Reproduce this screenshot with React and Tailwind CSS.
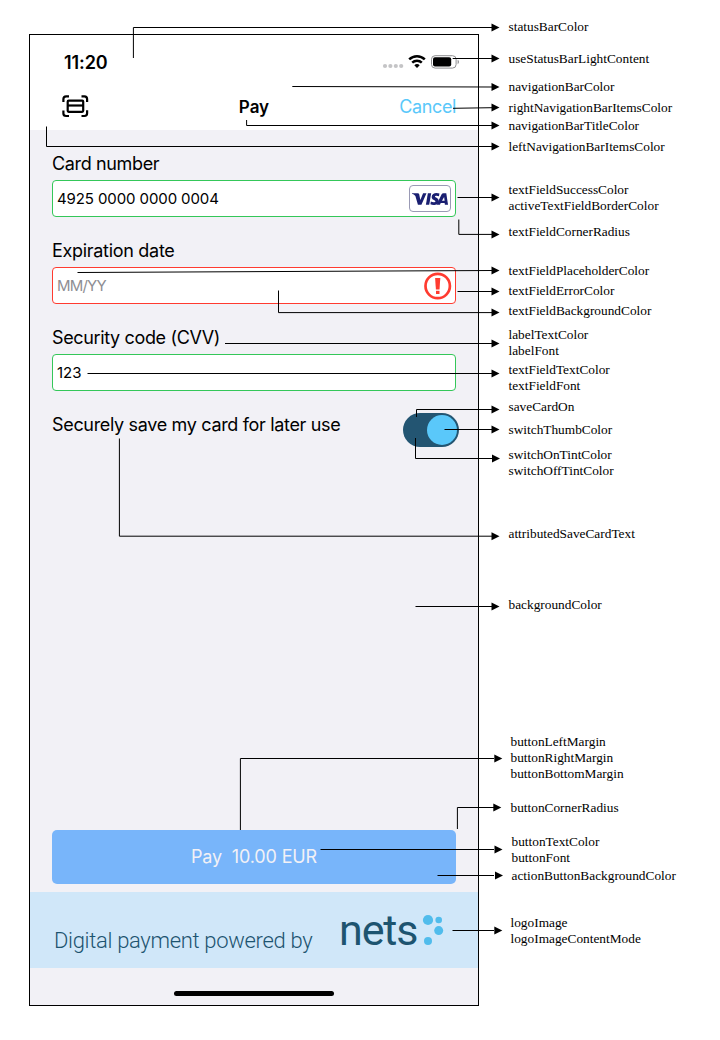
import React from "react";

const labels = [
  ["mt-[19px]", ["statusBarColor"]],
  ["mt-[16px]", ["useStatusBarLightContent"]],
  ["mt-[12px]", ["navigationBarColor"]],
  ["mt-[5px]", ["rightNavigationBarItemsColor"]],
  ["mt-[2px]", ["navigationBarTitleColor"]],
  ["mt-[5px]", ["leftNavigationBarItemsColor"]],
  ["mt-[27px]", ["textFieldSuccessColor", "activeTextFieldBorderColor"]],
  ["mt-[10px]", ["textFieldCornerRadius"]],
  ["mt-[23px]", ["textFieldPlaceholderColor"]],
  ["mt-[4px]", ["textFieldErrorColor"]],
  ["mt-[4px]", ["textFieldBackgroundColor"]],
  ["mt-[8px]", ["labelTextColor", "labelFont"]],
  ["mt-[3px]", ["textFieldTextColor", "textFieldFont"]],
  ["mt-[5px]", ["saveCardOn"]],
  ["mt-[7px]", ["switchThumbColor"]],
  ["mt-[9px]", ["switchOnTintColor", "switchOffTintColor"]],
  ["mt-[47px]", ["attributedSaveCardText"]],
  ["mt-[55px]", ["backgroundColor"]],
  ["mt-[121px] pl-[2px]", ["buttonLeftMargin", "buttonRightMargin", "buttonBottomMargin"]],
  ["mt-[18px] pl-[2px]", ["buttonCornerRadius"]],
  ["mt-[18px] pl-[3px]", ["buttonTextColor", "buttonFont"]],
  ["mt-[2px] pl-[3px]", ["actionButtonBackgroundColor"]],
  ["mt-[31px] pl-[2px]", ["logoImage", "logoImageContentMode"]],
];

// Each connector: path of the leader line, then the tip of its arrow head.
const connectors = [
  ["M133.4 58V27.5H492", 499.5, 27.5],
  ["M452.7 58.5H492", 499.5, 58.5],
  ["M292.3 86.5L492 87", 499.5, 87],
  ["M453 108.3L492 107.7", 499.5, 107.6],
  ["M246.6 120V125.5H492", 499.5, 125.5],
  ["M46.5 126.5V146.5H492", 499.5, 146.5],
  ["M457.5 197.5H492", 499.5, 197.5],
  ["M458.8 219.5V234.4H492", 499.5, 234.4],
  ["M77.5 272.5L492 270.5", 499.5, 270.5],
  ["M457.5 291.5H492", 499.5, 291.5],
  ["M278.5 290.5V312.6H492", 499.5, 312.6],
  ["M225 343.5H492", 499.5, 343.5],
  ["M87.5 373.5H492", 499.5, 373.5],
  ["M416.5 417V409.5H492", 499.5, 409.5],
  ["M444.5 429.5H492", 499.5, 429.5],
  ["M415.5 438V458.5H492", 500, 458.5],
  ["M119.4 438.5V536.2H492", 499.5, 536.2],
  ["M415.5 606.5H492", 499.5, 606.5],
  ["M240.4 830V758.5H494", 502.3, 758.5],
  ["M457.4 829V807.5H494", 501.3, 807.5],
  ["M320.5 849.5H494", 502.5, 849.5],
  ["M437.5 875.5H494", 503, 875.5],
  ["M452.5 930.5H494", 502.3, 930.5],
];

function Connectors() {
  return (
    <svg className="pointer-events-none absolute left-0 top-0" width="720" height="1040" fill="none" stroke="#000">
      {connectors.map(([d, x, y]) => (
        <g key={d}>
          <path d={d} />
          <path d={`M${x} ${y}l-8 -4v8z`} fill="#000" stroke="none" />
        </g>
      ))}
    </svg>
  );
}

function StatusBar() {
  return (
    <div className="flex h-[54px] items-center pl-[34px] pr-[19px]">
      <span className="text-[18px] font-semibold tracking-[-0.1px]">11:20</span>
      <svg className="ml-auto" width="77" height="18" viewBox="0 0 77 18">
        <g fill="#c4c4c6">
          <circle cx="3" cy="13" r="2.1" />
          <circle cx="8.4" cy="13" r="2.1" />
          <circle cx="13.8" cy="13" r="2.1" />
          <circle cx="19.2" cy="13" r="2.1" />
        </g>
        <g fill="none" stroke="#000" strokeWidth="2.5">
          <path d="M27.2 6.3a11.2 11.2 0 0 1 15.6 0" />
          <path d="M30.2 9.7a7 7 0 0 1 9.6 0" />
        </g>
        <path d="M35 15l-2.7-2.7a3.8 3.8 0 0 1 5.4 0z" />
        <rect x="49.5" y="2.7" width="24.6" height="12.4" rx="3.6" fill="none" stroke="#8e8e90" />
        <rect x="51" y="4.2" width="18.2" height="9.4" rx="2" />
        <path d="M75.6 6.8q1.4.6 1.4 2.2t-1.4 2.2z" fill="#8e8e90" />
      </svg>
    </div>
  );
}

function NavBar() {
  return (
    <div className="grid h-[41px] grid-cols-3 items-start pl-[32px] pr-[22px]">
      <svg className="mt-[6px]" width="27" height="23" viewBox="0 0 27 23" fill="none" stroke="#000" strokeWidth="2.2">
        <path d="M1.4 7V4Q1.4 1.3 4.1 1.3H7" />
        <path d="M19.500 1.3h2.900Q25.100 1.3 25.100 4V7" />
        <path d="M1.4 15.500v3Q1.400 21 4.100 21H7" />
        <path d="M19.500 21h2.900Q25.100 21 25.100 18.300v-3" />
        <rect x="5.700" y="5.600" width="15.500" height="11.200" rx="1" />
        <path d="M6 10.500h15.200" />
      </svg>
      <span className="mt-[7px] pr-[10px] text-center text-[17px] leading-[22px] font-semibold">Pay</span>
      <span className="mt-[7px] text-right text-[18px] leading-[22px] tracking-[-0.4px] text-[#5ac8fa]">Cancel</span>
    </div>
  );
}

function Visa() {
  return (
    <span className="flex h-[27px] w-[42px] items-center justify-center rounded-[4px] border border-[#9a9ab5] bg-white">
      <svg width="38" height="14" viewBox="0 0 39 14" fill="#1a1f71">
        <path d="M1 1h5.900q1.300 0 1.500 1.200l1.200 5.700L12.400 1h3.500l-5.200 12H7.100L4.500 3.800Q3 2 1 1.500z" />
        <path d="M17.300 1h3.400l-2 12h-3.400z" />
        <path d="M29.200 1.400l-.5 2.800c-2-.9-4.100-.7-4.100.3 0 1.200 3.900 1.400 3.900 4.500 0 3.900-4.900 5-8.600 3.500l.5-2.900c2 1.100 4.700 1 4.700-.2 0-1.300-3.900-1.400-3.900-4.500C21.200 1.100 25.700.1 29.200 1.400z" />
        <path d="M33.300 1h2.900L38 13h-3.200l-.3-1.800h-4L29.700 13h-3.500L31.300 2.300Q32 1 33.300 1zM34 5l-2.200 3.800h2.700z" />
      </svg>
    </span>
  );
}

function Alert() {
  return (
    <svg className="-mr-px" width="28" height="28" viewBox="0 0 28 28" fill="#ff3b30">
      <circle cx="13.700" cy="14" r="12.200" fill="none" stroke="#ff3b30" strokeWidth="2.700" />
      <path d="M11.100 6h5.200l-.8 11.400h-3.600z" />
      <rect x="12" y="18.800" width="3.500" height="3.200" />
    </svg>
  );
}

function Field({ label, tracking, border, children }) {
  return (
    <div className="h-[87px]">
      <div className={`h-[28px] pt-px text-[18px] leading-[22px] ${tracking}`}>{label}</div>
      <div className={`flex h-[37px] items-center justify-between rounded-[4px] border bg-white pl-[4px] pr-[4px] text-[15px] ${border}`}>
        {children}
      </div>
    </div>
  );
}

export default function App() {
  return (
    <div className="relative flex h-[1040px] w-[720px] overflow-hidden bg-white pl-[29px] font-['Inter',sans-serif] text-black">
      <main className="mt-[34px] flex h-[972px] w-[450px] shrink-0 flex-col border border-black bg-[#f2f1f6]">
        <header className="h-[95px] shrink-0 bg-white">
          <StatusBar />
          <NavBar />
        </header>
        <section className="px-[22px] pt-[22px]">
          <Field label="Card number" tracking="tracking-[-0.36px]" border="border-[#34c759]">
            <span className="pt-[2px] tracking-[-0.1px]">4925 0000 0000 0004</span>
            <Visa />
          </Field>
          <Field label="Expiration date" tracking="tracking-[-0.3px]" border="border-[#ff3b30]">
            <span className="pt-[2px] tracking-[-0.8px] text-[#8e8e93]">MM/YY</span>
            <Alert />
          </Field>
          <Field label="Security code (CVV)" tracking="tracking-[-0.36px]" border="border-[#34c759]">
            <span className="pt-[2px]">123</span>
          </Field>
          <div className="flex justify-between">
            <span className="whitespace-nowrap pt-px text-[18px] leading-[22px] tracking-[-0.33px]">Securely save my card for later use</span>
            <span className="-mr-[3px] flex h-[34px] w-[56px] shrink-0 items-center justify-end rounded-full bg-[#235572] pr-[2px]">
              <span className="size-[30px] rounded-full bg-[#5ac8fa]" />
            </span>
          </div>
        </section>
        <button className="mx-[22px] mt-auto h-[54px] shrink-0 whitespace-pre rounded-[5px] bg-[#78b5fa] text-[18px] tracking-[-0.15px] text-[#f2f1f6]">Pay  10.00 EUR</button>
        <footer className="mt-[8.500px] flex h-[76px] shrink-0 items-start bg-[#d0e7f9] pl-[24px] text-[#1d5470]">
          <span className="mt-[35px] w-[285px] whitespace-nowrap font-['Roboto',sans-serif] text-[22px] leading-[28px] font-light tracking-[-0.320px]">Digital payment powered by</span>
          <span className="mt-[13px] w-[83px] font-['Roboto',sans-serif] text-[43px] leading-[50px] tracking-[-1.100px]">nets</span>
          <svg className="mt-[22px]" width="22" height="32" viewBox="0 0 22 32" fill="#50bcec">
            <circle cx="6" cy="6" r="5.100" />
            <circle cx="16.700" cy="6" r="3.300" />
            <circle cx="16.700" cy="16.600" r="4.500" />
            <circle cx="6" cy="27" r="4" />
          </svg>
        </footer>
        <div className="mx-auto mb-[9px] mt-[23px] h-[5px] w-[160px] shrink-0 rounded-full bg-black" />
      </main>
      <aside className="ml-[29.500px] font-['Liberation_Serif',serif] text-[13.330px] leading-[16px]">
        {labels.map(([spacing, lines]) => (
          <div key={lines[0]} className={spacing}>
            {lines.map((line) => (
              <div key={line}>{line}</div>
            ))}
          </div>
        ))}
      </aside>
      <Connectors />
    </div>
  );
}
